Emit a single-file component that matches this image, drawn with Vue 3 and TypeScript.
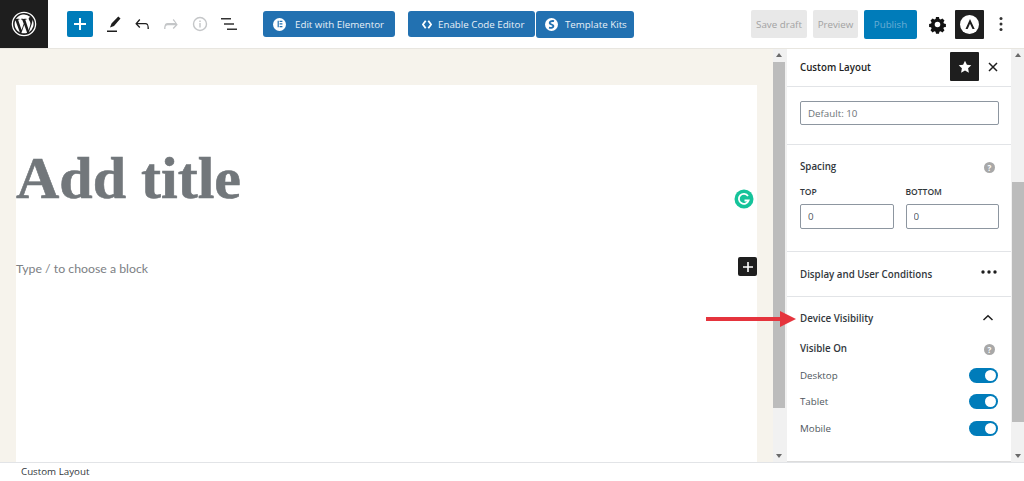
<script setup lang="ts">
const devices: string[] = ['Desktop', 'Tablet', 'Mobile']
</script>

<template>
  <div class="page">
    <header class="bar">
      <div class="logo">
        <svg width="26" height="26" viewBox="0 0 26 26">
          <circle cx="13" cy="13" r="11.6" fill="none" stroke="#fff" stroke-width="1.3" />
          <path fill="#fff" d="M3.6 13c0 3.7 2.2 7 5.3 8.5L4.4 9.2A9.4 9.4 0 0 0 3.6 13zm15.8-.5c0-1.2-.4-2-.8-2.600-.5-.8-.9-1.400-.9-2.200 0-.9.7-1.700 1.600-1.700h.1A9.400 9.400 0 0 0 5 7.900h.6c1 0 2.500-.1 2.500-.1.500 0 .6.700.1.800 0 0-.5.100-1.100.1l3.500 10.300 2.100-6.200-1.500-4.100c-.5 0-1-.1-1-.1-.5 0-.5-.8.100-.8 0 0 1.600.1 2.500.1 1 0 2.500-.1 2.500-.1.500 0 .6.700.1.800 0 0-.5.100-1.100.1l3.400 10.200 1-3.200c.4-1.300.7-2.200.7-3zM13.200 13.800l-2.800 8.200a9.500 9.500 0 0 0 5.800-.2l-.1-.1zm8.100-5.300c0 .3.100.7.100 1 0 1-.2 2.100-.7 3.500l-2.900 8.300a9.400 9.400 0 0 0 3.500-12.800z" />
        </svg>
      </div>
      <button class="add">
        <svg width="14" height="14" viewBox="0 0 14 14"><path d="M6 1h2v5h5v2H8v5H6V8H1V6h5z" fill="#fff" /></svg>
      </button>
      <div class="tools">
        <svg width="24" height="24" viewBox="0 0 24 24"><path d="M19.500 6.500 17.300 4.500 10.500 11.500 9 15.500l4-1.600zM6 18.500h10V20H6z" fill="#1e1e1e" /></svg>
        <svg width="24" height="24" viewBox="0 0 24 24"><path d="M17.800 11.900c-.6-.6-1.400-.9-2.300-.9H7.700l2.600-3-1-.9-4 4.600 4 4.300 1-.9-2.700-2.900h7.900c.5 0 .9.200 1.300.5.700.7.700 1.700.7 2.500V17h1.400v-.8c0-1.300-.6-3.300-1.100-4.300z" fill="#1e1e1e" /></svg>
        <svg width="24" height="24" viewBox="0 0 24 24"><path d="M14.700 7.100l-1 .9 2.600 3H8.500c-.9 0-1.700.3-2.300.9-.5 1-1.100 3-1.100 4.300v.8h1.400v-.8c0-.8 0-1.800.7-2.500.4-.3.800-.5 1.300-.5h7.900l-2.700 2.900 1 .9 4-4.300z" fill="#c4c6c8" /></svg>
        <svg width="24" height="24" viewBox="0 0 24 24"><circle cx="12" cy="12" r="6.500" fill="none" stroke="#c4c6c8" stroke-width="1.400" /><path d="M11.300 11h1.400v4.500h-1.400zM11.300 8.500h1.400V10h-1.400z" fill="#c4c6c8" /></svg>
        <svg width="24" height="24" viewBox="0 0 24 24"><path d="M4 6h10v1.500H4zM7 11.300h10v1.500H7zM10 16.500h10V18H10z" fill="#333" /></svg>
      </div>
      <button class="wp el">
        <span class="round"><svg width="8" height="8" viewBox="0 0 10 10"><path d="M2 1h1.500v8H2zM4.500 1H8v1.500H4.500zM4.500 4.200H8v1.500H4.500zM4.500 7.500H8V9H4.500z" fill="#2271b1" /></svg></span>
        Edit with Elementor
      </button>
      <button class="wp code">
        <svg width="10" height="9" viewBox="0 0 10 9"><path d="M3.700.8.900 4.500l2.800 3.700M6.300.8l2.800 3.700-2.800 3.700" fill="none" stroke="#fff" stroke-width="1.800" /></svg>
        Enable Code Editor
      </button>
      <button class="wp kits">
        <span class="round"><svg width="9" height="9" viewBox="0 0 10 10"><path d="M7.800 1.300C5 .6 2.800 1.800 3 3.500c.2 1.600 4.200 1.400 4.200 3.200 0 1.500-2.300 2.400-5 1.800" fill="none" stroke="#2271b1" stroke-width="2" /></svg></span>
        Template Kits
      </button>
      <div class="spring"></div>
      <button class="grey draft">Save draft</button>
      <button class="grey preview">Preview</button>
      <button class="publish">Publish</button>
      <svg class="gear" width="19" height="19" viewBox="2.500 2.500 19 19"><path fill-rule="evenodd" d="M10.500 4.500h3l.4 2 1.300.5 1.700-1.100 2.100 2.100-1.100 1.700.5 1.300 2 .4v3l-2 .4-.5 1.300 1.100 1.700-2.100 2.100-1.700-1.100-1.300.5-.4 2h-3l-.4-2-1.300-.5-1.700 1.100-2.100-2.100 1.100-1.700-.5-1.300-2-.4v-3l2-.4.5-1.300-1.100-1.700 2.100-2.100 1.700 1.100 1.300-.5zM12 9.200a2.800 2.800 0 1 0 0 5.600 2.800 2.800 0 0 0 0-5.600z" fill="#111" /></svg>
      <div class="astra">
        <span class="astra-disc">
          <svg width="14" height="14" viewBox="0 0 14 14"><path d="M7 2 2.500 12h2.200L7 6.800 9.500 12h2.200z" fill="#1e1e1e" /></svg>
        </span>
      </div>
      <svg class="dots" width="4" height="16" viewBox="0 0 4 16"><circle cx="2" cy="2.500" r="1.500" /><circle cx="2" cy="8" r="1.500" /><circle cx="2" cy="13.500" r="1.500" /></svg>
    </header>

    <div class="work">
      <main class="main">
        <article class="canvas">
          <h1 class="title">Add title</h1>
          <p class="para">Type / to choose a block</p>
          <span class="gram">
            <svg width="20" height="20" viewBox="0 0 20 20"><circle cx="10" cy="10" r="9.500" fill="#15c39a" /><path d="M14 7a5 5 0 1 0 .6 4.500H10.500" fill="none" stroke="#fff" stroke-width="1.800" /></svg>
          </span>
          <span class="block-add">
            <svg width="12" height="12" viewBox="0 0 12 12"><path d="M5.200 1h1.600v4.200H11v1.600H6.800V11H5.200V6.800H1V5.200h4.200z" fill="#fff" /></svg>
          </span>
        </article>
      </main>

      <div class="track main-track">
        <i class="up"></i>
        <div class="thumb"></div>
        <div class="fill"></div>
        <i class="down"></i>
      </div>

      <aside class="side">
        <div class="side-head">
          <span class="side-title">Custom Layout</span>
          <span class="star">
            <svg width="16" height="16" viewBox="0 0 16 16"><path d="m8 1.800 1.900 4 4.400.5-3.200 3 .8 4.400L8 11.600l-3.900 2.100.8-4.400-3.200-3 4.400-.5z" fill="#fff" /></svg>
          </span>
          <svg class="close" width="12" height="12" viewBox="0 0 12 12"><path d="m2 2 8 8M10 2l-8 8" stroke="#1e1e1e" stroke-width="1.500" /></svg>
        </div>
        <div class="side-body">
          <section class="sec priority">
            <div class="clip">Priority</div>
            <input class="field wide" value="" placeholder="Default: 10" />
          </section>
          <section class="sec spacing">
            <div class="row">
              <span class="lab">Spacing</span>
              <span class="help">?</span>
            </div>
            <div class="pair">
              <label class="col"><span class="cap">TOP</span><input class="field" value="0" /></label>
              <label class="col"><span class="cap">BOTTOM</span><input class="field" value="0" /></label>
            </div>
          </section>
          <section class="sec cond">
            <span class="lab">Display and User Conditions</span>
            <svg width="16" height="4" viewBox="0 0 16 4"><circle cx="2" cy="2" r="1.700" /><circle cx="8" cy="2" r="1.700" /><circle cx="14" cy="2" r="1.700" /></svg>
          </section>
          <section class="sec vis">
            <div class="row dv">
              <span class="lab">Device Visibility</span>
              <svg class="chev" width="12" height="8" viewBox="0 0 12 8"><path d="M1.500 6 6 1.800 10.500 6" fill="none" stroke="#1e1e1e" stroke-width="1.500" /></svg>
            </div>
            <div class="row von">
              <span class="lab">Visible On</span>
              <span class="help">?</span>
            </div>
            <div v-for="d in devices" :key="d" class="row dev">
              <span class="devname">{{ d }}</span>
              <span class="toggle"><span class="knob"></span></span>
            </div>
          </section>
        </div>
      </aside>

      <div class="track side-track">
        <i class="up"></i>
        <div class="gap"></div>
        <div class="thumb"></div>
        <div class="fill"></div>
        <i class="down"></i>
      </div>

      <svg class="arrow" width="90" height="16" viewBox="0 0 90 16"><path d="M0 6h74V0l16 8-16 8v-6H0z" fill="#e5343d" /></svg>
    </div>

    <footer class="foot">Custom Layout</footer>
  </div>
</template>

<style>
html, body { margin: 0; padding: 0; background: #fff; overflow: hidden; }
</style>

<style scoped>
.page { width: 1024px; height: 481px; display: flex; flex-direction: column; font-family: "Open Sans", "Noto Sans", sans-serif; color: #1e1e1e; overflow: hidden; }
button { font-family: inherit; border: 0; padding: 0; }

.bar { height: 48px; flex: none; display: flex; align-items: center; background: #fff; border-bottom: 1px solid #e8e6e0; box-sizing: content-box; }
.logo { width: 48px; height: 48px; background: #1e1e1e; display: flex; align-items: center; justify-content: center; }
.add { width: 26px; height: 26px; margin-left: 19px; background: #007cba; border-radius: 2px; display: flex; align-items: center; justify-content: center; }
.tools { display: flex; gap: 5px; margin-left: 8px; align-items: center; }
.wp { height: 26px; background: #2271b1; color: #e8f0f7; border-radius: 3px; font-size: 9.750px; display: flex; align-items: center; white-space: nowrap; box-sizing: border-box; }
.el { width: 132px; margin-left: 22px; padding-left: 10px; gap: 9px; }
.code { width: 127px; margin-left: 13px; padding-left: 14px; gap: 6px; }
.kits { width: 98px; height: 27px; margin-left: 1px; padding-left: 9px; gap: 7px; }
.round { width: 13px; height: 13px; border-radius: 50%; background: #fff; display: flex; align-items: center; justify-content: center; }
.spring { flex: 1; }
.grey { height: 28px; background: #e8e8e8; color: #a2a2a2; font-size: 9.750px; border-radius: 2px; }
.draft { width: 56px; }
.preview { width: 45px; margin-left: 6px; }
.publish { width: 53px; height: 29px; margin-left: 6px; background: #007cba; color: #6aaed4; font-size: 9.750px; border-radius: 2px; }
.gear { margin-left: 11px; }
.astra { width: 29px; height: 29px; margin-left: 8px; background: #1e1e1e; border-radius: 1px; display: flex; align-items: center; justify-content: center; }
.astra-disc { width: 19px; height: 19px; border-radius: 50%; background: #fff; display: flex; align-items: center; justify-content: center; }
.dots { margin-left: 15px; margin-right: 21px; fill: #333; }

.work { flex: 1; min-height: 0; display: flex; position: relative; }
.main { width: 773px; flex: none; background: #f6f3ec; padding: 36px 16px 0; box-sizing: border-box; overflow: hidden; }
.canvas { position: relative; width: 741px; height: 100%; background: #fff; }
.title { margin: 0; padding-top: 58px; font: bold 60px/70px "Liberation Serif", serif; color: #72777b; -webkit-text-stroke: 0.6px #72777b; }
.para { margin: 46px 0 0; font: 12.300px/20px "Lato", sans-serif; color: #7c8084; }
.gram { position: absolute; left: 718px; top: 104px; width: 20px; height: 20px; }
.block-add { position: absolute; left: 722px; top: 172px; width: 19px; height: 19px; background: #1e1e1e; border-radius: 2px; display: flex; align-items: center; justify-content: center; }

.track { flex: none; background: #f1f1f1; display: flex; flex-direction: column; align-items: center; box-sizing: border-box; }
.main-track { width: 14px; padding-right: 2px; }
.main-track .thumb { height: 346px; }
.side-track { width: 13px; padding-left: 1px; }
.side-track .gap { height: 125px; width: 100%; }
.side-track .thumb { height: 240px; }
.thumb { width: 100%; background: #bcbcbc; flex: none; }
.fill { flex: 1; }
.up, .down { display: block; width: 0; height: 0; border-left: 3.500px solid transparent; border-right: 3.500px solid transparent; flex: none; }
.up { border-bottom: 4px solid #6a6a6a; margin: 4px 0 5px; }
.side-track .up { margin-bottom: 0; }
.down { border-top: 4px solid #6a6a6a; margin: 5px 0 4px; }

.side { width: 224px; flex: none; background: #fff; display: flex; flex-direction: column; box-sizing: border-box; border-bottom: 1px solid #dcdcdc; min-height: 0; }
.side-head { height: 38px; flex: none; display: flex; align-items: center; padding: 0 0 2px 13px; border-bottom: 1px solid #e2e4e7; box-sizing: border-box; }
.side-title { font-size: 9.750px; font-weight: 600; flex: 1; padding-top: 2px; }
.star { width: 29px; height: 29px; background: #1e1e1e; border-radius: 1px; display: flex; align-items: center; justify-content: center; }
.close { margin: 0 12px 0 8px; }
.side-body { flex: 1; overflow: hidden; min-height: 0; }
.sec { padding: 0 13px; border-bottom: 1px solid #e2e4e7; }
.priority { height: 58px; box-sizing: border-box; }
.clip { height: 15px; margin-top: -10px; font-size: 9.750px; line-height: 15px; transform: translateY(-3px); color: #32373c; }
.field { display: block; box-sizing: border-box; height: 25px; width: 100%; border: 1px solid #8d96a0; border-radius: 2px; padding: 0 7px; font: 9.750px "Open Sans", sans-serif; color: #50575e; background: #fff; outline: 0; }
.field::placeholder { color: #6d7378; opacity: 1; }
.wide { width: 199px; height: 24px; margin-top: 9px; }
.priority { height: 68px; }
.spacing { height: 107px; box-sizing: border-box; padding-top: 12px; }
.row { display: flex; align-items: center; justify-content: space-between; }
.lab { font-size: 9.750px; line-height: 20px; font-weight: 600; color: #32373c; }
.help { width: 11px; height: 11px; margin-right: 3px; border-radius: 50%; background: #a8a8a8; color: #fff; font: bold 8px/11px "Open Sans", sans-serif; text-align: center; }
.pair { display: flex; gap: 12px; margin-top: 9px; width: 199px; }
.col { display: flex; flex-direction: column; flex: 1; }
.cap { font-size: 8.500px; line-height: 12px; font-weight: 600; color: #32373c; margin-bottom: 6px; }
.cond { height: 45px; box-sizing: border-box; display: flex; align-items: center; justify-content: space-between; padding: 2px 14px 0 13px; }
.cond svg { fill: #1e1e1e; margin-top: -6px; }
.vis { border-bottom: 0; padding-top: 12px; }
.dv { height: 20px; }
.chev { margin-right: 4px; margin-top: -2px; }
.von { height: 20px; margin-top: 10px; }
.dev { height: 26.500px; }
.von + .dev { margin-top: 3px; }
.devname { font-size: 9.750px; color: #50575e; }
.toggle { width: 29px; height: 15px; border-radius: 8px; background: #007cba; display: flex; align-items: center; justify-content: flex-end; padding-right: 2px; box-sizing: border-box; }
.knob { width: 11px; height: 11px; border-radius: 50%; background: #fff; }

.arrow { position: absolute; left: 706px; top: 262px; }

.foot { height: 19px; flex: none; box-sizing: border-box; border-top: 1px solid #e2e4e7; background: #fff; padding-left: 21px; font-size: 9.750px; line-height: 18px; color: #32373c; }
</style>
